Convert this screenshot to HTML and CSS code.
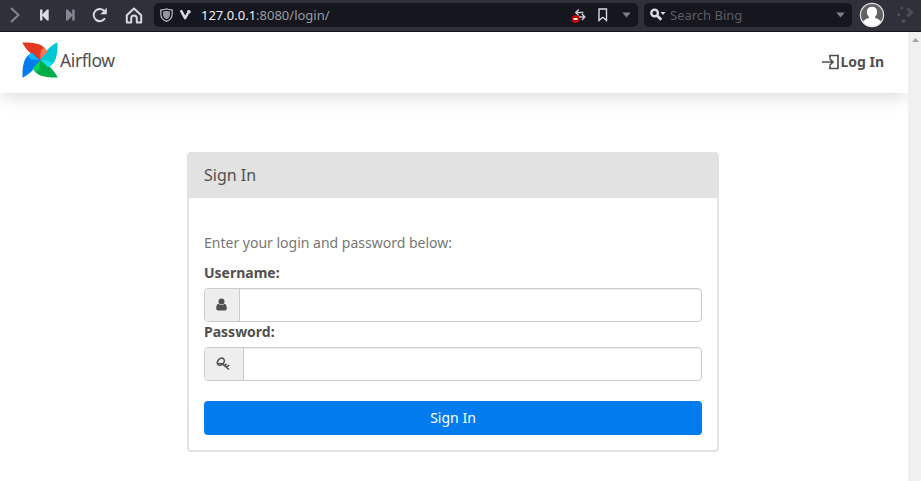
FILE: index.html
```html
<!DOCTYPE html>
<html lang="en">
<head>
<meta charset="utf-8">
<title>Sign In - Airflow</title>
<link rel="stylesheet" href="styles.css">
</head>
<body>
<div class="toolbar">
  <div class="nav-icons">
    <svg class="chevron" width="10" height="16" viewBox="0 0 10 16"><path d="M1 1l7.500 7L1 15"/></svg>
    <svg class="solid" width="9" height="12" viewBox="0 0 9 12"><path d="M0 .5h2.500v4.700L7 .5h1.700v11H7L2.500 6.800v4.700H0z"/></svg>
    <svg class="solid dim" width="9" height="12" viewBox="0 0 9 12"><path d="M8.700 .5H6.200v4.700L1.700 .5H0v11h1.700l4.500-4.700v4.700h2.500z"/></svg>
    <svg class="reload" width="17" height="17" viewBox="0 0 17 17"><path class="line" d="M13.500 4.200A6.100 6.100 0 1 0 14 11.300"/><path class="fill" d="M15.800.700v6.500H9.300z"/></svg>
    <svg class="home" width="18" height="17" viewBox="0 0 18 17"><path class="line" d="M1.800 8.200L9 1.500l7.200 6.700v7.300h-4.400v-4.200a2.800 2.800 0 0 0-5.600 0v4.200H1.800z"/></svg>
  </div>
  <div class="address">
    <svg class="shield" width="13" height="14" viewBox="0 0 13 14"><path class="line" d="M6.500.8C4.700 1.800 2.800 2 .8 1.800v4.400c0 3.400 2.200 5.800 5.700 7.200 3.500-1.400 5.700-3.800 5.700-7.200V1.800C10.200 2 8.300 1.800 6.500.8z"/><path class="fill" d="M6.500 2.700C5.300 3.300 4.200 3.500 3 3.500v2.900c0 2.200 1.200 3.800 3.500 4.900C8.800 10.200 10 8.600 10 6.400V3.500c-1.200 0-2.300-.2-3.500-.8z"/></svg>
    <svg class="vee" width="13" height="12" viewBox="0 0 13 12"><path d="M2.300 2.200L6.100 9.200 8.400 5"/><circle cx="9.800" cy="2.800" r="1.900"/></svg>
    <span class="url"><b>127.0.0.1</b>:8080/login/</span>
    <svg class="swap" width="16" height="18" viewBox="0 0 16 18"><path class="line" d="M12.500 6.500H5M7.700 3.500L4.700 6.500l3 3M7.500 11h6.300M10.900 8l3 3-3 3"/><circle cx="4.500" cy="13" r="4"/><path class="bar" d="M2.500 12h4v2h-4z"/></svg>
    <svg class="bookmark" width="10" height="14" viewBox="0 0 10 14"><path d="M1 1h7.500v11.400L4.750 9.300 1 12.400z"/></svg>
    <svg class="caret" width="9" height="6" viewBox="0 0 9 6"><path d="M.3.500h8.400L4.500 5.500z"/></svg>
  </div>
  <div class="search">
    <svg width="16" height="14" viewBox="0 0 16 14"><circle class="line" cx="4.600" cy="5" r="3.300"/><path class="handle" d="M7 7.500l4.300 4.300"/><path class="fill" d="M10.500 4h5L13 7z"/></svg>
    <span>Search Bing</span>
    <svg class="caret" width="9" height="6" viewBox="0 0 9 6"><path d="M.3.500h8.400L4.500 5.500z"/></svg>
  </div>
  <svg class="avatar" width="26" height="26" viewBox="0 0 26 26"><circle cx="13" cy="13" r="11.600" fill="#626262"/><path d="M3.800 20.200c.9-2.400 3.600-3.500 6.200-4.200v-1c-1.500-1.400-2.100-3.200-2.100-5.200 0-3.300 2-5 5.100-5s5.100 1.700 5.100 5c0 2-.6 3.800-2.100 5.200v1c2.600.7 5.300 1.800 6.200 4.200-2.100 2.900-5.300 4.400-9.200 4.400s-7.100-1.500-9.200-4.400z" fill="#fff"/><circle cx="13" cy="13" r="11.600" fill="none" stroke="#e3e3e4" stroke-width="1.200"/></svg>
  <svg class="extend" width="18" height="18" viewBox="0 0 18 18"><circle cx="1.800" cy="9.600" r="1.500"/><circle cx="4.800" cy="3" r="1.500"/><circle cx="6.500" cy="16" r="2"/><path d="M10.300 3.500l4.200 4-4.200 4"/></svg>
</div>
<div class="viewport">
  <div class="page">
    <header class="navbar">
      <div class="brand">
        <svg width="36" height="36" viewBox="0 0 36 36">
          <defs>
            <path id="blade" d="M18 18L9.500 12C5.500 9 3 5.500.2.600 7 .2 17 .800 21.500 5 23.500 6.800 24.800 8.500 25 10.500z"/>
            <path id="fold" d="M18 18L18.500 11.500C18.800 8.500 20 7 22.300 6 23.800 7.200 24.800 8.800 25 10.500 22.500 12.200 20 14.500 18 18z"/>
          </defs>
          <use href="#blade" fill="#e43921"/>
          <use href="#blade" fill="#00c7d4" transform="rotate(90 18 18)"/>
          <use href="#blade" fill="#00ad46" transform="rotate(180 18 18)"/>
          <use href="#blade" fill="#017cee" transform="rotate(270 18 18)"/>
          <use href="#fold" fill="#ff7557"/>
          <use href="#fold" fill="#11e1ee" transform="rotate(90 18 18)"/>
          <use href="#fold" fill="#04d659" transform="rotate(180 18 18)"/>
          <use href="#fold" fill="#0cb6ff" transform="rotate(270 18 18)"/>
          <circle cx="18" cy="18" r=".8" fill="#51504f"/>
        </svg>
        <span>Airflow</span>
      </div>
      <a class="login-link"><svg width="19" height="16" viewBox="0 0 19 16"><path d="M9 4V1.500h8v13H9V12"/><path d="M1 8h10.500M8.500 4.500L12 8l-3.500 3.500"/></svg><span>Log In</span></a>
    </header>
    <main class="panel">
      <div class="panel-heading">Sign In</div>
      <form class="panel-body">
        <p>Enter your login and password below:</p>
        <label>Username:</label>
        <div class="field">
          <span class="addon"><svg width="11" height="13" viewBox="0 0 11 13"><circle cx="5.500" cy="3.500" r="3"/><path d="M2.400 5.700C.9 6 .2 8 .2 10.300.2 11.900 1 12.500 2.200 12.500h6.600c1.200 0 2-.6 2-2.200 0-2.300-.7-4.300-2.200-4.600A4.300 4.300 0 0 1 2.400 5.700z"/></svg></span>
          <span class="input"></span>
        </div>
        <label>Password:</label>
        <div class="field">
          <span class="addon key"><svg width="15" height="14" viewBox="0 0 15 14"><ellipse cx="4.800" cy="4.700" rx="4" ry="3" transform="rotate(-48 4.800 4.700)"/><path d="M1.200 6.500L6.500 6.800l6.500 5.700M10.600 10.400l2.400-2.400M8.800 8.600l1.700-1.700"/></svg></span>
          <span class="input"></span>
        </div>
        <div class="button">Sign In</div>
      </form>
    </main>
  </div>
  <div class="scrollbar"><svg width="7" height="4" viewBox="0 0 7 4"><path d="M0 4h7L3.500 0z"/></svg></div>
</div>
</body>
</html>
```
FILE: styles.css
```css
* { box-sizing: border-box; }
body {
  margin: 0;
  height: 481px;
  overflow: hidden;
  background: #fff;
  color: #51504f;
  font: 14px/20px "Noto Sans", sans-serif;
}
svg { display: block; flex: none; overflow: visible; }
.toolbar {
  display: flex;
  align-items: flex-start;
  height: 32px;
  padding-top: 3px;
  background: #2f3039;
  border-bottom: 1px solid #14141c;
}
.nav-icons {
  display: flex;
  align-items: center;
  width: 154px;
  height: 24px;
  padding-left: 10px;
  fill: #d8dae3;
}
.nav-icons .chevron { margin-right: 20px; fill: none; stroke: #858691; stroke-width: 2; }
.nav-icons .solid { margin-right: 17px; }
.nav-icons .dim { margin-right: 16px; fill: #858691; }
.nav-icons .reload { margin-right: 17px; }
.line { fill: none; stroke: #d8dae3; stroke-width: 2; stroke-linejoin: round; }
.address, .search {
  display: flex;
  align-items: center;
  height: 24px;
  border-radius: 5px;
  background: #15161e;
}
.address { width: 484px; padding: 0 7px 0 6px; }
.shield .line { stroke: #b9bac2; stroke-width: 1.2; }
.shield .fill { fill: #94959d; }
.vee { margin: 0 9px 0 6px; fill: #d8dae3; }
.vee path { fill: none; stroke: #d8dae3; stroke-width: 2.6; stroke-linecap: round; stroke-linejoin: round; }
.url { flex: 1; color: #9a9ba3; font-size: 13px; }
.url b { font-weight: 400; color: #f1f1f4; }
.swap .line { stroke: #c8cad3; stroke-width: 1.4; }
.swap circle { fill: #c50000; }
.swap .bar { fill: #fff; }
.bookmark { margin: 0 14px 0 11px; fill: none; stroke: #d8dae3; stroke-width: 1.4; }
.caret { fill: #7d7f89; }
.search { width: 208px; margin-left: 6px; padding: 0 7px 0 6px; color: #5c5d66; font-size: 13px; }
.search .line { stroke-width: 2.4; }
.search .handle { stroke: #d8dae3; stroke-width: 2.8; }
.search .fill { fill: #d8dae3; }
.search span { flex: 1; padding-left: 4px; }
.avatar { margin: -1px 12px 0 7px; }
.extend { margin-top: 2px; fill: #4d4e50; }
.extend path { fill: none; stroke: #4d4e50; stroke-width: 3; }
.viewport { display: flex; height: 449px; }
.page { width: 908px; overflow: hidden; }
.navbar {
  display: flex;
  align-items: center;
  justify-content: space-between;
  height: 61px;
  padding: 0 24px 2px 22px;
  box-shadow: 0 2px 18px rgba(0, 0, 0, .17);
}
.brand { display: flex; align-items: center; padding-bottom: 3px; font-size: 17.5px; letter-spacing: -.4px; }
.brand svg { margin-right: 2px; }
.login-link { display: flex; align-items: center; font-weight: 700; }
.login-link svg { fill: none; stroke: #51504f; stroke-width: 1.7; }
.panel {
  width: 532px;
  height: 300px;
  margin: 59px 0 0 187px;
  border: 2px solid #e2e2e2;
  border-radius: 4px;
}
.panel-heading { height: 44px; padding: 11px 15px; background: #e2e2e2; font-size: 16px; }
.panel-body { display: flex; flex-direction: column; padding: 35px 15px 15px; }
.panel-body p { margin: 0 0 10px; color: #777; }
label { height: 25px; font-weight: 700; }
.field { display: flex; height: 34px; border: 1px solid #ccc; border-radius: 4px; background: #fff; overflow: hidden; }
.addon { display: flex; align-items: center; width: 35px; padding: 0 0 1px 11px; border-right: 1px solid #ccc; background: #eee; fill: #51504f; }
.addon.key { width: 39px; padding-bottom: 0; }
.key svg { fill: none; stroke: #51504f; stroke-width: 1.6; }
.input { flex: 1; box-shadow: inset 0 1px 1px rgba(0, 0, 0, .075); }
.button { height: 34px; margin-top: 20px; padding: 7px; border-radius: 4px; background: #017cee; color: #fff; text-align: center; }
.scrollbar { width: 13px; padding: 6px 0 0 4px; background: #f0f0f0; fill: #a3a3a3; }
```
